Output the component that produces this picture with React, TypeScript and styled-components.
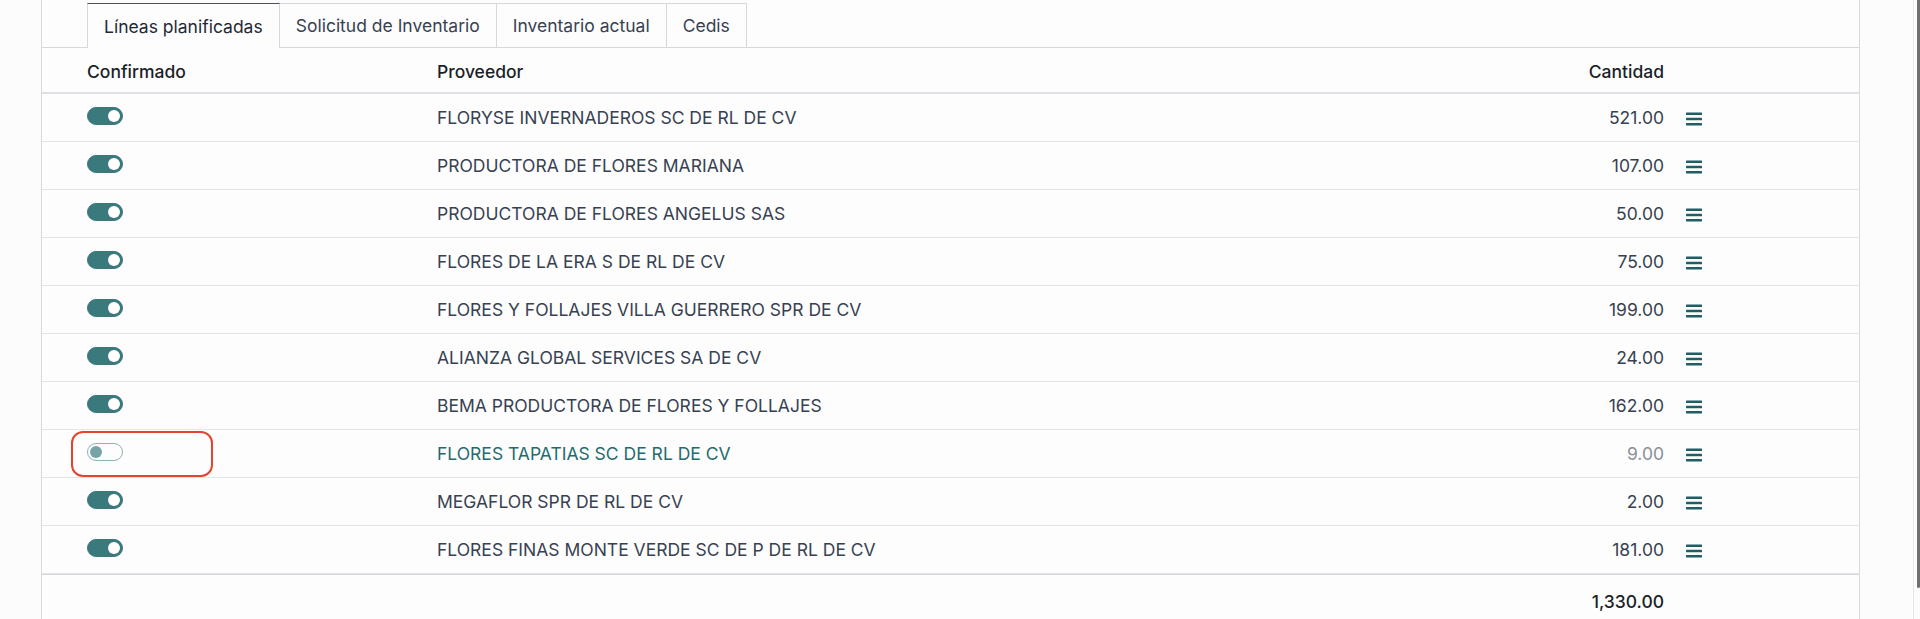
import React from 'react';
import styled, { createGlobalStyle } from 'styled-components';

const GlobalStyle = createGlobalStyle`
    html, body {
        margin     : 0;
        padding    : 0;
        background : #fcfcfc;
        font-family: Inter, "Noto Sans", "Liberation Sans", sans-serif;
        color      : #374151;
    }
`

const Page = styled.div`
    display   : flex;
    width     : 1920px;
    height    : 619px;
    overflow  : hidden;
`

const Sheet = styled.div`
    margin-left : 41px;
    width       : 1817px;
    border-left : 1px solid #d9dadf;
    border-right: 1px solid #d9dadf;
    background  : #fdfdfd;
`

const Gutter = styled.div`
    flex: 1;
`

const ScrollTrack = styled.div`
    width          : 6px;
    border-left    : 1px solid #e6e6e8;
    display        : flex;
    justify-content: flex-end;
    align-items    : flex-start;
`

const ScrollThumb = styled.div`
    width        : 3px;
    height       : 588px;
    background   : #707074;
    border-radius: 0 0 2px 2px;
`

const TabBar = styled.div`
    display      : flex;
    align-items  : flex-end;
    height       : 47px;
    padding-left : 45px;
    border-bottom: 1px solid #d6d8dc;
`

const Tab = styled.div<{ $active?: boolean }>`
    box-sizing   : border-box;
    padding      : 0 16px;
    display      : flex;
    align-items  : center;
    font-size    : 17.5px;
    color        : ${p => p.$active ? '#1f2937' : '#374151'};
    border       : 1px solid #d6d8dc;
    border-left  : ${p => p.$active ? '1px solid #d6d8dc' : 'none'};
    border-top   : 1px solid ${p => p.$active ? '#4b5058' : '#d6d8dc'};
    border-bottom: none;
    margin-bottom: ${p => p.$active ? '-1px' : '0'};
    height       : ${p => p.$active ? '45px' : '44px'};
    background   : ${p => p.$active ? '#fdfdfd' : 'transparent'};
    &:first-child {
        border-left: 1px solid #d6d8dc;
    }
`

const Row = styled.div<{ $head?: boolean; $foot?: boolean }>`
    position             : relative;
    display              : grid;
    grid-template-columns: 395px 1fr 200px 195px;
    align-items          : center;
    box-sizing           : border-box;
    height               : ${p => p.$head ? '46px' : '48px'};
    padding-top          : ${p => p.$head ? '3px' : p.$foot ? '6px' : '0'};
    border-bottom        : ${p => p.$head ? '2px solid #dfe1e5' : p.$foot ? 'none' : '1px solid #e3e5e8'};
    border-top           : ${p => p.$foot ? '1px solid #d4d6da' : 'none'};
    font-size            : 17.5px;
    font-weight          : ${p => p.$head || p.$foot ? 500 : 400};
    color                : ${p => p.$head || p.$foot ? '#1b1f27' : '#374151'};
`

const Cell = styled.div<{ $right?: boolean; $tone?: string; $indent?: boolean }>`
    position    : relative;
    text-align  : ${p => p.$right ? 'right' : 'left'};
    color       : ${p => p.$tone || 'inherit'};
    padding-left: ${p => p.$indent ? '45px' : '0'};
    white-space : nowrap;
`

const ToggleCell = styled(Cell)`
    padding-left  : 45px;
    display       : flex;
    align-items   : center;
    height        : 100%;
    padding-bottom: 3px;
    box-sizing    : border-box;
`

const HandleCell = styled.div`
    padding-left: 22px;
    display     : flex;
    align-items : center;
    padding-top : 2px;
`

const Toggle = styled.span<{ $on: boolean }>`
    display        : inline-flex;
    align-items    : center;
    justify-content: ${p => p.$on ? 'flex-end' : 'flex-start'};
    box-sizing     : border-box;
    width          : 36px;
    height         : 18px;
    padding        : 0 2px;
    border-radius  : 9px;
    background     : ${p => p.$on ? '#3a7a7d' : '#fdfdfd'};
    border         : 1.5px solid ${p => p.$on ? '#3a7a7d' : '#8db2b4'};
    &::after {
        content      : '';
        width        : 12px;
        height       : 12px;
        border-radius: 50%;
        background   : ${p => p.$on ? '#ffffff' : '#76a4a7'};
    }
`

const Marker = styled.div`
    position      : absolute;
    left          : 29px;
    top           : 1px;
    width         : 142px;
    height        : 46px;
    box-sizing    : border-box;
    border        : 2px solid #e4432c;
    border-radius : 12px;
    pointer-events: none;
`

const HandleIcon = () => (
    <svg width="16" height="14" viewBox="0 0 16 14">
        <rect x="0" y="0.5" width="16" height="2.6" rx="0.6" fill="#1f5f63" />
        <rect x="0" y="5.7" width="16" height="2.6" rx="0.6" fill="#1f5f63" />
        <rect x="0" y="10.9" width="16" height="2.6" rx="0.6" fill="#1f5f63" />
    </svg>
)

interface Line {
    confirmed: boolean;
    vendor: string;
    qty: number;
}

const lines: Line[] = [
    { confirmed: true, vendor: 'FLORYSE INVERNADEROS SC DE RL DE CV', qty: 521 },
    { confirmed: true, vendor: 'PRODUCTORA DE FLORES MARIANA', qty: 107 },
    { confirmed: true, vendor: 'PRODUCTORA DE FLORES ANGELUS SAS', qty: 50 },
    { confirmed: true, vendor: 'FLORES DE LA ERA S DE RL DE CV', qty: 75 },
    { confirmed: true, vendor: 'FLORES Y FOLLAJES VILLA GUERRERO SPR DE CV', qty: 199 },
    { confirmed: true, vendor: 'ALIANZA GLOBAL SERVICES SA DE CV', qty: 24 },
    { confirmed: true, vendor: 'BEMA PRODUCTORA DE FLORES Y FOLLAJES', qty: 162 },
    { confirmed: false, vendor: 'FLORES TAPATIAS SC DE RL DE CV', qty: 9 },
    { confirmed: true, vendor: 'MEGAFLOR SPR DE RL DE CV', qty: 2 },
    { confirmed: true, vendor: 'FLORES FINAS MONTE VERDE SC DE P DE RL DE CV', qty: 181 },
];

const fmt = (n: number) =>
    n.toLocaleString('en-US', { minimumFractionDigits: 2, maximumFractionDigits: 2 });

const tabs = ['Líneas planificadas', 'Solicitud de Inventario', 'Inventario actual', 'Cedis'];

const App = () => {
    const total = lines.reduce((s, l) => s + l.qty, 0);

    return (
        <>
            <GlobalStyle />
            <Page>
                <Sheet>
                    <TabBar>
                        {tabs.map((t, i) => <Tab key={t} $active={i === 0}>{t}</Tab>)}
                    </TabBar>

                    <Row $head>
                        <Cell $indent>Confirmado</Cell>
                        <Cell>Proveedor</Cell>
                        <Cell $right>Cantidad</Cell>
                        <div />
                    </Row>

                    {lines.map(l => (
                        <Row key={l.vendor}>
                            <ToggleCell>
                                <Toggle $on={l.confirmed} />
                                {!l.confirmed && <Marker />}
                            </ToggleCell>
                            <Cell $tone={l.confirmed ? undefined : '#236b6e'}>{l.vendor}</Cell>
                            <Cell $right $tone={l.confirmed ? undefined : '#8a8f97'}>{fmt(l.qty)}</Cell>
                            <HandleCell><HandleIcon /></HandleCell>
                        </Row>
                    ))}

                    <Row $foot>
                        <div />
                        <div />
                        <Cell $right>{fmt(total)}</Cell>
                        <div />
                    </Row>
                </Sheet>
                <Gutter />
                <ScrollTrack>
                    <ScrollThumb />
                </ScrollTrack>
            </Page>
        </>
    )
}

export default App;
